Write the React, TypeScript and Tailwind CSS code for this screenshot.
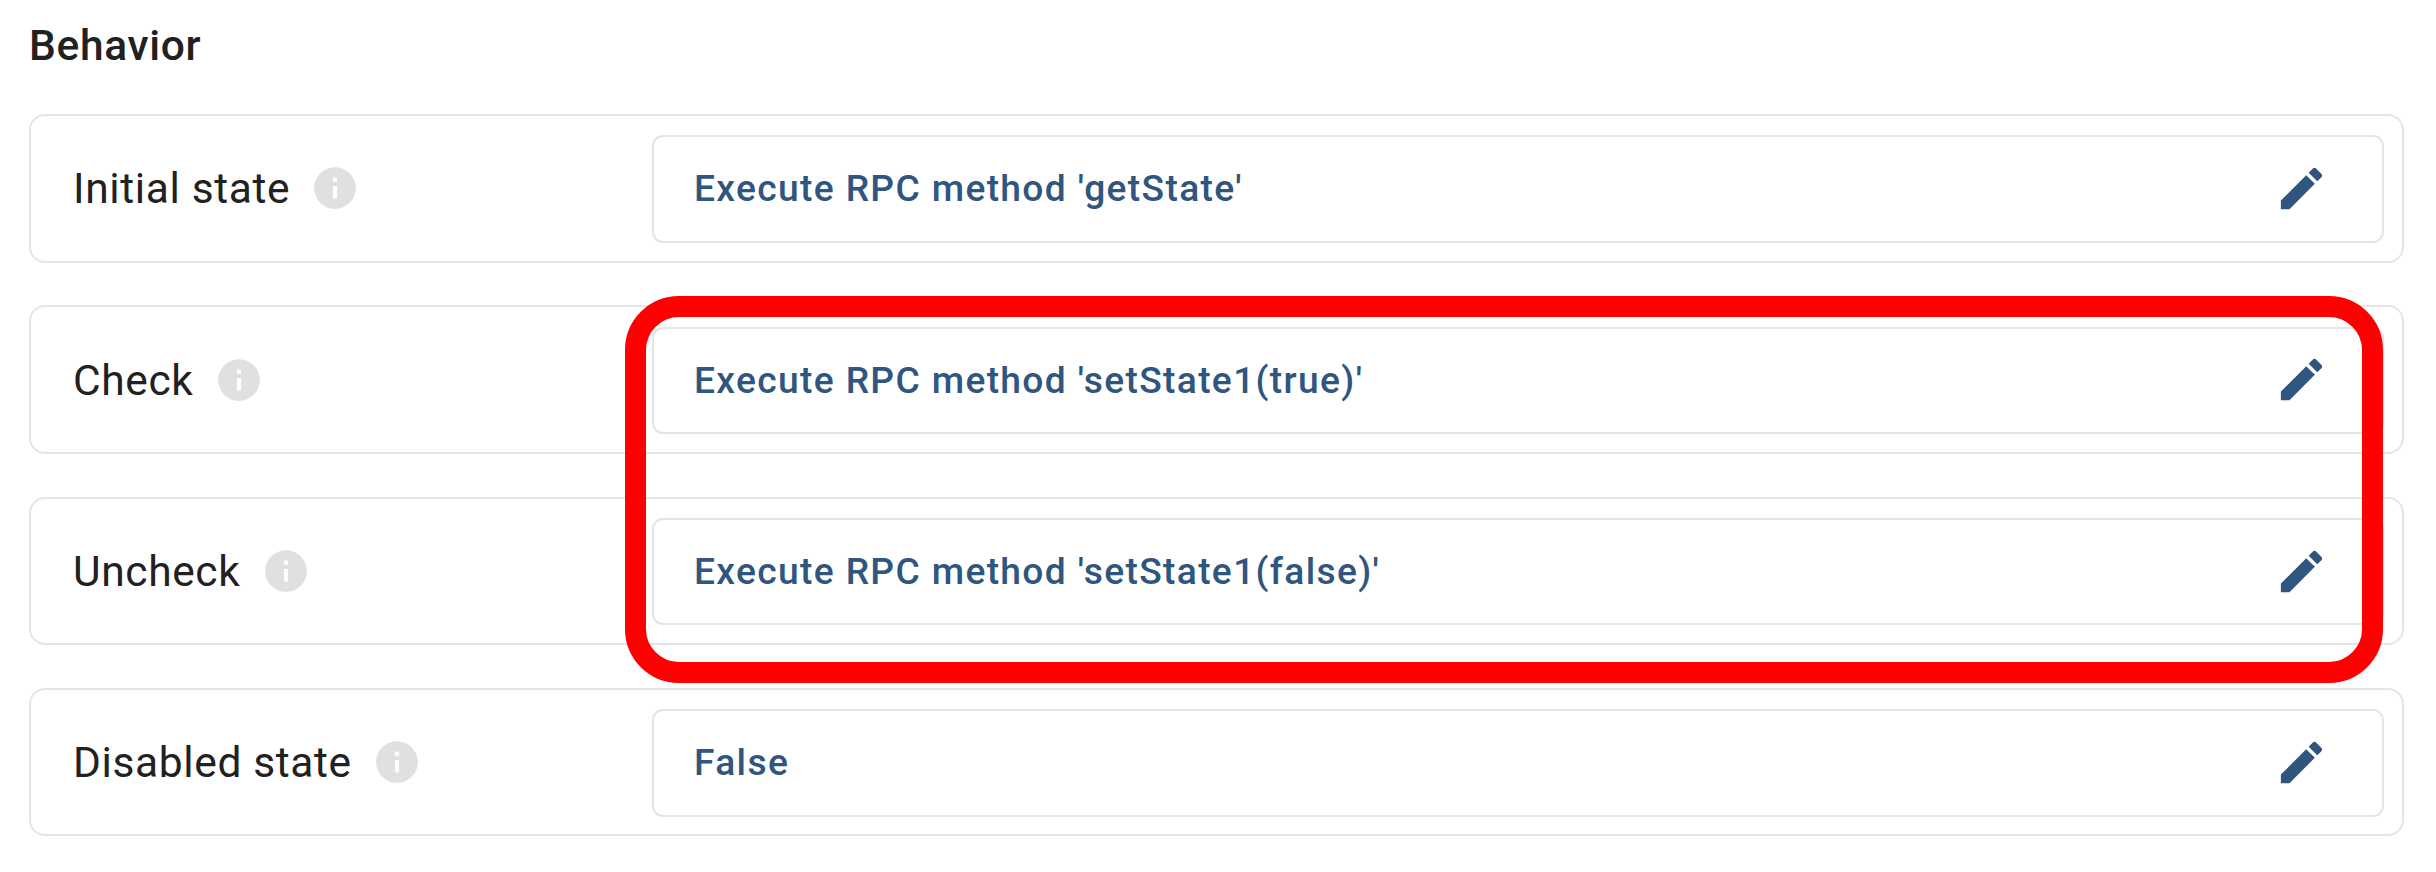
type Setting = { label: string; value: string };

const settings: Setting[] = [
  { label: 'Initial state', value: "Execute RPC method 'getState'" },
  { label: 'Check', value: "Execute RPC method 'setState1(true)'" },
  { label: 'Uncheck', value: "Execute RPC method 'setState1(false)'" },
  { label: 'Disabled state', value: 'False' },
];

function InfoIcon() {
  return (
    <svg viewBox="0 0 24 24" className="size-[50px] shrink-0 fill-[#e0e0e0]">
      <path d="M12 2C6.48 2 2 6.48 2 12s4.48 10 10 10 10-4.48 10-10S17.52 2 12 2zm1 15h-2v-6h2v6zm0-8h-2V7h2v2z" />
    </svg>
  );
}

function PencilIcon() {
  return (
    <svg viewBox="0 0 24 24" className="-mt-px size-[55px] shrink-0 fill-[#305680]">
      <path d="M20.71 7.04C21.1 6.65 21.1 6 20.71 5.63L18.37 3.29C18 2.9 17.35 2.9 16.96 3.29L15.12 5.12L18.87 8.87M3 17.25V21H6.75L17.81 9.93L14.06 6.18L3 17.25Z" />
    </svg>
  );
}

function SettingRow({ label, value }: Setting) {
  return (
    <div className="flex h-[148.5px] items-center rounded-[16px] border-2 border-[#e5e5e5] pr-[18px] pl-[42px]">
      <div className="flex w-[579px] shrink-0 items-center gap-[20.3px]">
        <span className="pt-px text-[42.5px] leading-[43px] tracking-[0.63px] whitespace-nowrap text-[#212121]">{label}</span>
        <InfoIcon />
      </div>
      <button
        type="button"
        className="mt-[1.5px] flex h-[107.4px] flex-1 items-center justify-between rounded-[11px] border-2 border-[#e5e5e5] pr-[53.4px] pl-[40px] text-left"
      >
        <span className="text-[37.2px] leading-none font-medium tracking-[1.34px] whitespace-nowrap text-[#305680]">
          {value}
        </span>
        <PencilIcon />
      </button>
    </div>
  );
}

export default function App() {
  return (
    <main className="relative h-[872px] w-[2436px] overflow-hidden bg-white pt-[20px] pr-[32px] pl-[29px] font-['Roboto',sans-serif]">
      <h2 className="h-[94px] text-[42.5px] leading-[52px] font-medium tracking-[0.67px] text-[#212121]">Behavior</h2>
      <div className="flex flex-col gap-[42.8px]">
        {settings.map((s) => (
          <SettingRow key={s.label} label={s.label} value={s.value} />
        ))}
      </div>
      <div className="pointer-events-none absolute top-[296px] left-[625px] h-[387px] w-[1758px] rounded-[54px] border-[21px] border-[#ff0000]" />
    </main>
  );
}
